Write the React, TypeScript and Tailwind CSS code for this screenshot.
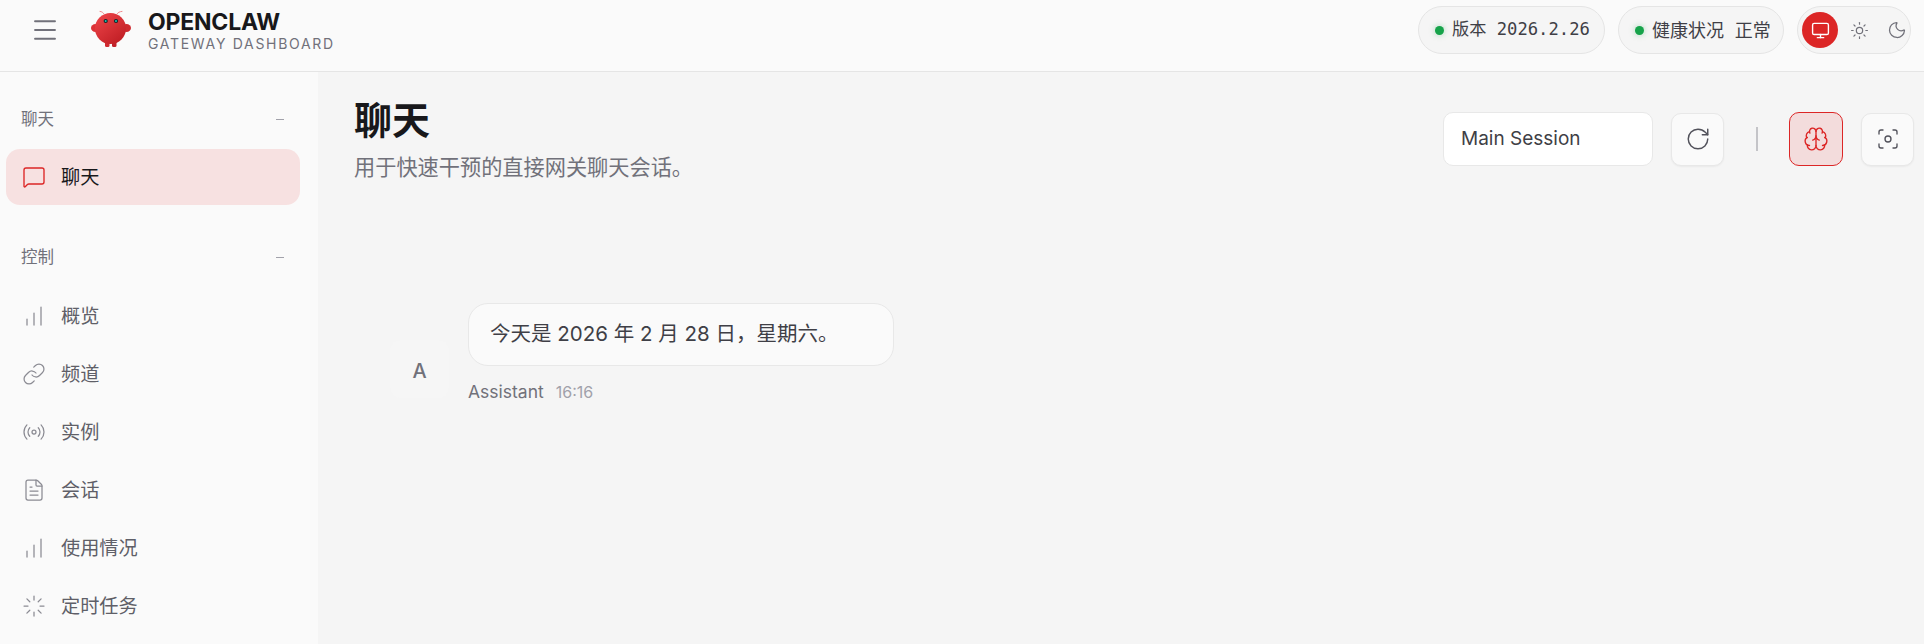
import {
  Brain,
  ChartNoAxesColumnIncreasing,
  FileText,
  Focus,
  Link,
  Loader,
  Menu,
  MessageSquare,
  Monitor,
  Moon,
  Radio,
  RotateCw,
  Sun,
} from "lucide-react";

const controlItems = [
  { icon: ChartNoAxesColumnIncreasing, label: "概览" },
  { icon: Link, label: "频道" },
  { icon: Radio, label: "实例" },
  { icon: FileText, label: "会话" },
  { icon: ChartNoAxesColumnIncreasing, label: "使用情况" },
  { icon: Loader, label: "定时任务" },
];

function Logo() {
  return (
    <svg width="42" height="38" viewBox="0 0 42 38" className="shrink-0">
      <defs>
        <linearGradient id="body" x1="0.1" y1="0" x2="0.9" y2="1">
          <stop offset="0" stopColor="#ee4449" />
          <stop offset="1" stopColor="#bd1c22" />
        </linearGradient>
      </defs>
      <path d="M14 4 C13 2.5 12 1.6 10 1.4 M27 4 C28 2.5 29.5 1.6 32 1.4" fill="none" stroke="#f08a8c" strokeWidth="1" strokeLinecap="round" />
      <ellipse cx="5.5" cy="18" rx="4.5" ry="4" fill="#dc3237" />
      <ellipse cx="36.5" cy="18" rx="4.5" ry="4" fill="#cf2a2f" />
      <rect x="15" y="30" width="4.5" height="7" rx="1.5" fill="#d02b30" />
      <rect x="22" y="30" width="4.5" height="7" rx="1.5" fill="#c2222a" />
      <circle cx="20.5" cy="18.5" r="15.5" fill="url(#body)" />
      <circle cx="15.7" cy="11" r="2.1" fill="#0f2a2c" />
      <circle cx="26" cy="11" r="2.1" fill="#0f2a2c" />
      <circle cx="15.7" cy="11" r="1" fill="#1fc4b4" />
      <circle cx="26" cy="11" r="1" fill="#1fc4b4" />
    </svg>
  );
}

function SectionLabel({ label }: { label: string }) {
  return (
    <div className="flex h-6 items-center justify-between pr-[28px] pl-[15px] text-[16.5px] text-[#71717a]">
      <span>{label}</span>
      <span className="h-px w-2 bg-[#a1a1aa]" />
    </div>
  );
}

function ToolButton({ children, active }: { children: React.ReactNode; active?: boolean }) {
  return (
    <button
      className={
        active
          ? "flex h-[54px] w-[54px] items-center justify-center rounded-[10px] border border-[#dc2626] bg-[#f3dcdc] text-[#dc2626]"
          : "flex h-[53px] w-[53px] items-center justify-center rounded-[10px] border border-[#e8e8e8] bg-[#fafafa] text-[#52525b] shadow-[0_1px_2px_rgba(0,0,0,0.05)]"
      }
    >
      {children}
    </button>
  );
}

export default function App() {
  return (
    <div className="flex h-[644px] w-[1924px] flex-col overflow-hidden bg-[#f5f5f5] font-['Inter','Noto_Sans_CJK_SC',sans-serif] text-[#18181b]">
      <header className="flex h-[72px] shrink-0 items-center justify-between border-b border-[#e5e5e5] bg-[#fafafa] pr-[13px] pb-[11px] pl-[30px]">
        <div className="flex items-center">
          <Menu size={30} strokeWidth={1.5} className="text-[#71717a]" />
          <div className="mb-[2px] ml-[30px]">
            <Logo />
          </div>
          <div className="ml-4 flex flex-col pt-[2px]">
            <span className="text-[23px] leading-[26px] font-bold tracking-[-0.2px]">OPENCLAW</span>
            <span className="text-[14px] leading-[18px] tracking-[1.7px] text-[#71717a]">GATEWAY DASHBOARD</span>
          </div>
        </div>
        <div className="flex items-center gap-[13px]">
          <div className="flex h-[48px] w-[187px] items-center gap-2 rounded-full border border-[#e5e5e5] bg-[#f5f5f5] pl-4">
            <span className="h-[9px] w-[9px] rounded-full bg-[#16a34a] shadow-[0_0_6px_rgba(22,163,74,0.35)]" />
            <span className="font-['DejaVu_Sans_Mono','Noto_Sans_CJK_SC',monospace] text-[17.2px] text-[#3f3f46]">版本 2026.2.26</span>
          </div>
          <div className="flex h-[48px] w-[166px] items-center gap-2 rounded-full border border-[#e5e5e5] bg-[#f5f5f5] pl-4">
            <span className="h-[9px] w-[9px] rounded-full bg-[#16a34a] shadow-[0_0_6px_rgba(22,163,74,0.35)]" />
            <span className="font-['DejaVu_Sans_Mono','Noto_Sans_CJK_SC',monospace] text-[18px] text-[#3f3f46]">健康状况 正常</span>
          </div>
          <div className="flex h-[48px] w-[114px] items-center rounded-full border border-[#e5e5e5] bg-[#f5f5f5] pl-[4px]">
            <span className="flex h-9 w-9 shrink-0 items-center justify-center rounded-full bg-[#dc2626] text-white">
              <Monitor size={19} strokeWidth={1.75} />
            </span>
            <span className="ml-[7px] flex h-9 w-[28px] shrink-0 items-center justify-center text-[#71717a]">
              <Sun size={19} strokeWidth={1.5} />
            </span>
            <span className="ml-[11px] flex h-9 w-[26px] shrink-0 items-center justify-center text-[#71717a]">
              <Moon size={20} strokeWidth={1.5} />
            </span>
          </div>
        </div>
      </header>

      <div className="flex min-h-0 flex-1">
        <aside className="w-[318px] shrink-0 overflow-hidden bg-[#fafafa] px-[6px] pt-[35px]">
          <SectionLabel label="聊天" />
          <div className="mt-[18px] flex h-[56px] w-[294px] items-center rounded-[14px] bg-[#f7e1e1] pl-[16px] text-[19.2px] text-[#18181b]">
            <MessageSquare size={24} strokeWidth={1.35} className="text-[#dc2626]" />
            <span className="ml-[15px]">聊天</span>
          </div>
          <div className="mt-[40px]">
            <SectionLabel label="控制" />
          </div>
          <nav className="mt-[19px] flex flex-col gap-[2px]">
            {controlItems.map((item) => {
              const Icon = item.icon;
              return (
                <div key={item.label} className="flex h-[56px] items-center pl-[16px] text-[19.2px] text-[#5f5f68]">
                  <Icon size={24} strokeWidth={1.25} className="text-[#8b8b93]" />
                  <span className="ml-[15px]">{item.label}</span>
                </div>
              );
            })}
          </nav>
        </aside>

        <main className="min-w-0 flex-1 pt-[23px] pr-[10px] pl-[36px]">
          <div className="flex items-start justify-between">
            <div>
              <h1 className="text-[38px] leading-[50px] font-bold text-[#18181b]">聊天</h1>
              <p className="mt-[9px] text-[21.2px] leading-[26px] text-[#71717a]">用于快速干预的直接网关聊天会话。</p>
            </div>
            <div className="mt-[17px] flex items-center">
              <div className="flex h-[54px] w-[210px] items-center rounded-[10px] border border-[#e8e8e8] bg-white pt-px pl-[17px] text-[19px] text-[#3f3f46]">
                Main Session
              </div>
              <div className="ml-[18px]">
                <ToolButton>
                  <RotateCw size={26} strokeWidth={1.35} />
                </ToolButton>
              </div>
              <span className="mr-[31px] ml-[32px] h-[24px] w-[2px] bg-[#c4c4c8]" />
              <ToolButton active>
                <Brain size={26} strokeWidth={1.25} />
              </ToolButton>
              <div className="ml-[18px]">
                <ToolButton>
                  <Focus size={24} strokeWidth={1.35} />
                </ToolButton>
              </div>
            </div>
          </div>

          <div className="mt-[123px] ml-[36px] flex items-end gap-[19px]">
            <div className="mb-[5px] flex h-[58px] w-[59px] items-center justify-center rounded-[10px] bg-[#f6f6f6] pt-[4px] text-[20px] font-medium text-[#71717a]">
              A
            </div>
            <div>
              <div className="flex h-[63px] w-[426px] items-center rounded-[20px] border border-[#e8e8e8] bg-[#fafafa] pl-[21px] text-[20.5px] text-[#3f3f46]">
                今天是 2026 年 2 月 28 日，星期六。
              </div>
              <div className="mt-[15px] flex items-center gap-3 leading-[22px]">
                <span className="text-[17.5px] text-[#71717a]">Assistant</span>
                <span className="text-[16px] text-[#a1a1aa]">16:16</span>
              </div>
            </div>
          </div>
        </main>
      </div>
    </div>
  );
}
